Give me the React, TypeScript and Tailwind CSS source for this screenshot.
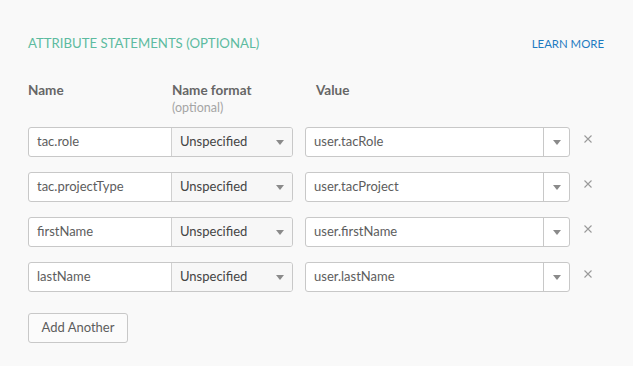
import React from "react";

const rows = [
  { name: "tac.role", value: "user.tacRole" },
  { name: "tac.projectType", value: "user.tacProject" },
  { name: "firstName", value: "user.firstName" },
  { name: "lastName", value: "user.lastName" },
];

function Caret() {
  return (
    <svg width="8" height="5" viewBox="0 0 8 5" className="block">
      <path d="M0 0 L8 0 L4 5 Z" fill="#8a8a8a" />
    </svg>
  );
}

export default function App() {
  return (
    <div
      className="w-[633px] h-[366px] bg-[#f9f9f9] pl-[28px] pr-[29px] pt-[35px] text-[13px] text-[#5d5d5d]"
      style={{ fontFamily: "Lato, 'Liberation Sans', sans-serif" }}
    >
      <div className="flex items-center justify-between h-[18px]">
        <div className="text-[13.2px] text-[#5dbba0]">ATTRIBUTE STATEMENTS (OPTIONAL)</div>
        <div className="text-[11.4px] text-[#1f7bc1]">LEARN MORE</div>
      </div>

      <div className="flex mt-[28px] h-[34px]">
        <div className="w-[144px] font-bold text-[13.5px] text-[#666666] leading-[18px]">Name</div>
        <div className="w-[144px] leading-[18px]">
          <div className="font-bold text-[13.5px] text-[#666666]">Name format</div>
          <div className="text-[12.5px] text-[#a5a5a5] leading-[17px]">(optional)</div>
        </div>
        <div className="font-bold text-[13.5px] text-[#666666] leading-[18px]">Value</div>
      </div>

      <div className="flex flex-col gap-[15px] mt-[12px]">
        {rows.map((r) => (
          <div key={r.name} className="flex items-start h-[30px]">
            <div className="flex h-[30px] w-[265px] border border-[#c8c8c8] rounded-[3px] bg-white overflow-hidden">
              <div className="w-[143px] h-full flex items-center pl-[8px] text-[#5d5d5d] border-r border-[#d0d0d0]">
                {r.name}
              </div>
              <div className="flex-1 h-full flex items-center justify-between pl-[8px] pr-[8px] bg-[#f7f7f7] text-[#444444]">
                <span>Unspecified</span>
                <Caret />
              </div>
            </div>
            <div className="ml-[12px] flex h-[30px] w-[265px] border border-[#c8c8c8] rounded-[3px] bg-white overflow-hidden">
              <div className="flex-1 h-full flex items-center pl-[8px] text-[#5d5d5d]">{r.value}</div>
              <div className="w-[26px] h-full border-l border-[#c8c8c8] flex items-center justify-center">
                <Caret />
              </div>
            </div>
            <div className="ml-[14px] mt-[8px]">
              <svg width="8" height="8" viewBox="0 0 8 8" className="block">
                <path d="M0.5 0.5 L7.5 7.5 M7.5 0.5 L0.5 7.5" stroke="#9a9a9a" strokeWidth="1.1" />
              </svg>
            </div>
          </div>
        ))}
      </div>

      <button className="mt-[21px] h-[30px] w-[100px] border border-[#c8c8c8] rounded-[3px] bg-[#fbfbfb] text-[#5d5d5d] text-[13px] flex items-center justify-center">
        Add Another
      </button>
    </div>
  );
}
